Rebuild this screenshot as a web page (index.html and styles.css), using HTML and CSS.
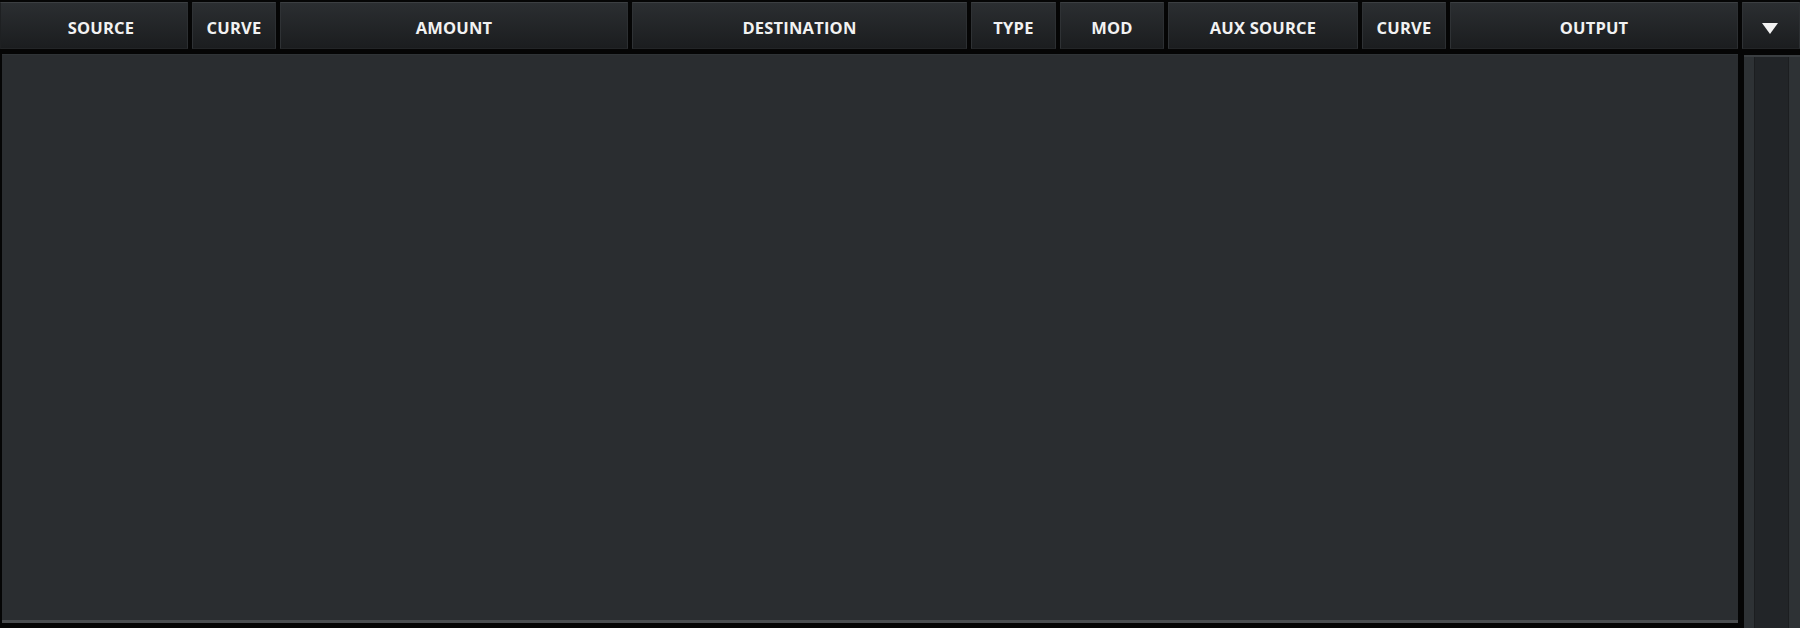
FILE: index.html
```html
<!DOCTYPE html>
<html>
<head>
<meta charset="utf-8">
<link rel="stylesheet" href="styles.css">
</head>
<body>
<div class="app">
  <div class="header">
    <div class="hcell w-source">SOURCE</div>
    <div class="hcell w-curve">CURVE</div>
    <div class="hcell w-amount">AMOUNT</div>
    <div class="hcell w-dest">DESTINATION</div>
    <div class="hcell w-type">TYPE</div>
    <div class="hcell w-mod">MOD</div>
    <div class="hcell w-aux">AUX SOURCE</div>
    <div class="hcell w-curve2">CURVE</div>
    <div class="hcell w-output">OUTPUT</div>
    <div class="hcell w-menu"><span class="arrow"></span></div>
  </div>
  <div class="body">
    <div class="list"></div>
    <div class="scroll">
      <div class="scroll-edge"></div>
      <div class="scroll-track"></div>
      <div class="scroll-edge right"></div>
    </div>
  </div>
</div>
</body>
</html>
```
FILE: styles.css
```css
html, body {
  margin: 0;
  padding: 0;
  background: #050505;
}
.app {
  width: 1800px;
  height: 628px;
  display: flex;
  flex-direction: column;
  background: #050505;
  overflow: hidden;
}
.header {
  display: flex;
  gap: 4px;
  padding-top: 2px;
  height: 47px;
  flex: none;
}
.hcell {
  box-sizing: border-box;
  height: 47px;
  display: flex;
  align-items: center;
  justify-content: center;
  padding-top: 3px;
  background: linear-gradient(#2b2e31, #1b1d1f);
  border-top: 1px solid #3c3f42;
  border-left: 1px solid #2f3235;
  border-right: 1px solid #2c2f32;
  border-bottom: 1px solid #232527;
  color: #f2f2f2;
  font-family: "Open Sans", "Noto Sans", sans-serif;
  font-weight: 700;
  font-size: 16.5px;
  letter-spacing: 0.2px;
}
.w-source { width: 188px; border-left-color: #1e2022; padding-left: 14px; }
.w-curve { width: 84px; }
.w-amount { width: 348px; }
.w-dest { width: 335px; }
.w-type { width: 85px; }
.w-mod { width: 104px; }
.w-aux { width: 190px; }
.w-curve2 { width: 84px; }
.w-output { width: 288px; }
.w-menu { width: 58px; padding-top: 6px; }
.arrow {
  width: 0;
  height: 0;
  border-left: 8px solid transparent;
  border-right: 8px solid transparent;
  border-top: 11px solid #f2f2f2;
  margin-right: 2px;
}
.body {
  display: flex;
  gap: 6px;
  margin-top: 5px;
  flex: 1;
  min-height: 0;
}
.list {
  flex: 1;
  margin-left: 2px;
  height: 569px;
  box-sizing: border-box;
  background: #2a2d30;
  border-top: 1px solid #2f3336;
  border-bottom: 3px solid #4a4d50;
}
.scroll {
  width: 56px;
  margin-top: 1px;
  display: flex;
  border-top: 2px solid #3a3e41;
}
.scroll-edge {
  width: 10px;
  background: #2e3235;
  border-right: 1px solid #1c1e20;
}
.scroll-edge.right {
  width: 11px;
  border-right: none;
  border-left: 1px solid #1c1e20;
}
.scroll-track {
  flex: 1;
  background: #222528;
}
```
